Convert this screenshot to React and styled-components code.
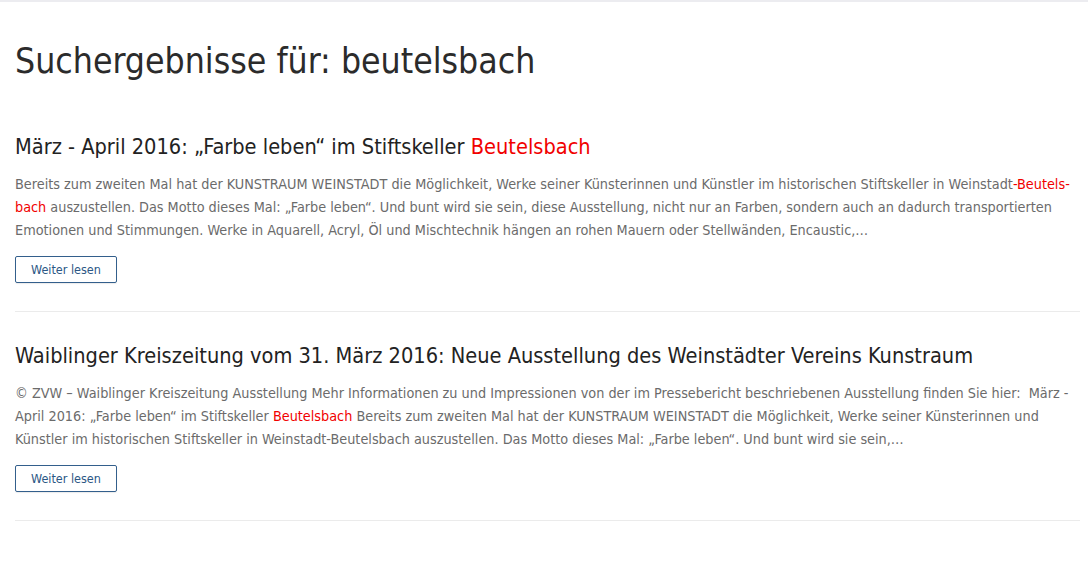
import React from "react";
import styled, { createGlobalStyle } from "styled-components";

const Global = createGlobalStyle`
  html, body {
    margin: 0;
    padding: 0;
    background: #fff;
  }
  body {
    font-family: "DejaVu Sans Condensed", "DejaVu Sans", sans-serif;
    color: #333;
  }
`;

const TopBar = styled.div`
  height: 2px;
  background: #ececf0;
`;

const Page = styled.main`
  padding: 0 8px 40px 15px;
`;

const Heading = styled.h1`
  margin: 0;
  padding: 38px 0 51px;
  font-size: 35.3px;
  font-weight: 400;
  line-height: 1.2;
  color: #2b2b2b;
`;

const Result = styled.article`
  padding: 0 0 28px;
  margin-bottom: 30px;
  border-bottom: 1px solid #ebebeb;
`;

const Title = styled.h2`
  margin: 0 0 12px;
  font-size: 21.6px;
  font-weight: 400;
  line-height: 1.3;
  color: #222;
`;

const Excerpt = styled.p`
  margin: 0 0 14px;
  font-size: 14.3px;
  line-height: 23px;
  color: #6b6b6b;
  hyphens: manual;
`;

const Mark = styled.span`
  color: #f10000;
`;

const Keep = styled.span`
  white-space: nowrap;
`;

const MoreButton = styled.a`
  display: inline-block;
  padding: 0 15px;
  height: 25px;
  line-height: 25px;
  border: 1px solid #335f8c;
  border-radius: 2px;
  font-size: 12.5px;
  color: #2c5785;
  text-decoration: none;
  box-shadow: 0 1px 1px rgba(0, 0, 0, 0.08);
`;

export default function App() {
  return (
    <>
      <Global />
      <TopBar />
      <Page>
        <Heading>Suchergebnisse für: beutelsbach</Heading>

        <Result>
          <Title>
            März - April 2016: „Farbe leben“ im Stiftskeller <Mark>Beutelsbach</Mark>
          </Title>
          <Excerpt>
            Bereits zum zweiten Mal hat der KUNSTRAUM WEINSTADT die Möglichkeit, Werke seiner
            Künsterinnen und Künstler im historischen Stiftskeller in{" "}
            <Keep>
              Weinstadt<Mark>-Beutels</Mark>
            </Keep>
            <Mark>{"\u00AD"}bach</Mark> auszustellen. Das Motto dieses Mal: „Farbe leben“. Und bunt
            wird sie sein, diese Ausstellung, nicht nur an Farben, sondern auch an dadurch
            transportierten Emotionen und Stimmungen. Werke in Aquarell, Acryl, Öl und Mischtechnik
            hängen an rohen Mauern oder Stellwänden, Encaustic,…
          </Excerpt>
          <MoreButton href="#">Weiter lesen</MoreButton>
        </Result>

        <Result>
          <Title>
            Waiblinger Kreiszeitung vom 31. März 2016: Neue Ausstellung des Weinstädter Vereins
            Kunstraum
          </Title>
          <Excerpt>
            © ZVW – Waiblinger Kreiszeitung Ausstellung Mehr Informationen zu und Impressionen von
            der im Pressebericht beschriebenen Ausstellung finden Sie hier:&nbsp; März&nbsp;-
            April 2016: „Farbe leben“ im Stiftskeller <Mark>Beutelsbach</Mark> Bereits zum zweiten
            Mal hat der KUNSTRAUM WEINSTADT die Möglichkeit, Werke seiner Künsterinnen und Künstler
            im historischen Stiftskeller in Weinstadt-Beutelsbach auszustellen. Das Motto dieses
            Mal: „Farbe leben“. Und bunt wird sie sein,…
          </Excerpt>
          <MoreButton href="#">Weiter lesen</MoreButton>
        </Result>
      </Page>
    </>
  );
}
